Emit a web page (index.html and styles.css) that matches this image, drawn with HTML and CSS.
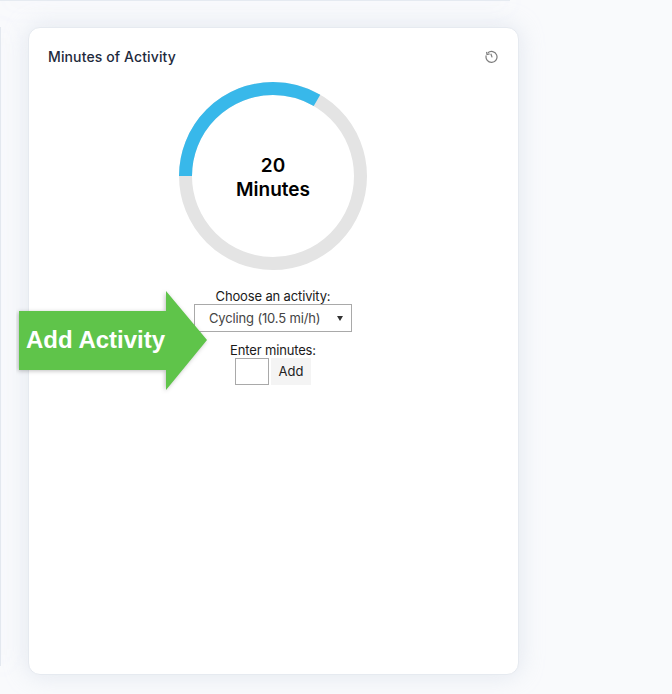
FILE: index.html
```html
<!DOCTYPE html>
<html lang="en">
<head>
  <meta charset="UTF-8" />
  <title>Minutes of Activity</title>
  <link rel="stylesheet" href="styles.css">
</head>
<body>
  <div class="top-card"></div>

  <div class="row">
    <div class="side-card"></div>

    <div class="card">
      <div class="card-head">
        <div class="card-title">Minutes of Activity</div>
        <svg class="history" width="14" height="14" viewBox="0 0 14 14" fill="none" stroke="#7d7d7d" stroke-width="1.2">
          <path d="M3.9 2.8A5.5 5.5 0 1 1 2.2 5.5" />
          <path d="M2.6 1.8L3 4.6L5.6 3.9" />
          <path d="M6.8 3.8L8.1 7.4" />
        </svg>
      </div>

      <div class="donut">
        <svg width="188" height="188" viewBox="0 0 188 188" fill="none" stroke-width="13">
          <circle cx="94" cy="94" r="87.5" stroke="#e4e4e4" />
          <circle cx="94" cy="94" r="87.5" stroke="#38b8ea" stroke-dasharray="183.3 549.8" transform="rotate(180 94 94)" />
        </svg>
        <div class="donut-label">20<br>Minutes</div>
      </div>

      <form class="activity-form">
        <label class="field-label">Choose an activity:</label>
        <div class="select">Cycling (10.5 mi/h)</div>
        <label class="field-label minutes-label">Enter minutes:</label>
        <div class="minutes-row">
          <div class="minutes-input"></div>
          <div class="add-btn">Add</div>
        </div>
      </form>
    </div>
  </div>

  <!-- callout over the card -->
  <div class="callout">
    <svg width="200" height="112" viewBox="0 0 200 112">
      <polygon class="arrow" points="3,23 150,23 150,3 191,52 150,102 150,82 3,82" />
    </svg>
    <div class="callout-text">Add Activity</div>
  </div>
</body>
</html>
```

FILE: styles.css
```css
* {
  box-sizing: border-box;
}

body {
  margin: 0;
  height: 694px;
  overflow: hidden;
  background-color: #f9fafc;
  font-family: 'Inter', 'Liberation Sans', sans-serif;
  position: relative;
}

.top-card {
  width: 510px;
  height: 1px;
  background-color: #e6ebf1;
  box-shadow: 0 0 24px rgba(190, 202, 220, 0.4);
}

.row {
  display: flex;
  align-items: flex-start;
  gap: 27px;
  padding-top: 26px;
}

.side-card {
  width: 1px;
  height: 639px;
  background-color: #e3e8ef;
  box-shadow: 0 0 24px rgba(190, 202, 220, 0.4);
}

.card {
  width: 491px;
  height: 648px;
  background-color: #fff;
  border: 1px solid #e6eaf0;
  border-radius: 12px;
  box-shadow: 0 0 24px rgba(190, 202, 220, 0.4);
  padding: 18px 20px 0 19px;
}

.card-head {
  display: flex;
  align-items: center;
  justify-content: space-between;
  height: 22px;
  padding-bottom: 1px;
}

.card-title {
  font-size: 14px;
  font-weight: 500;
  color: #1e2a3c;
  letter-spacing: 0.12px;
}

.donut {
  position: relative;
  width: 188px;
  height: 188px;
  margin: 14px auto 0;
}

.donut svg {
  display: block;
}

.donut-label {
  position: absolute;
  inset: 0;
  display: flex;
  align-items: center;
  justify-content: center;
  text-align: center;
  font-size: 19px;
  font-weight: 600;
  line-height: 24px;
  color: #000;
  padding-top: 3px;
}

.activity-form {
  display: flex;
  flex-direction: column;
  align-items: center;
  margin-top: 19px;
}

.field-label {
  font-size: 13px;
  line-height: 15px;
  color: #1a1a1a;
  letter-spacing: -0.15px;
}

.select {
  position: relative;
  width: 158px;
  height: 28px;
  border: 1px solid #a9a9a9;
  padding-left: 14px;
  font-size: 13px;
  line-height: 26px;
  color: #444;
  letter-spacing: -0.15px;
}

.select::after {
  content: '';
  position: absolute;
  right: 8px;
  top: 11px;
  border-left: 3.5px solid transparent;
  border-right: 3.5px solid transparent;
  border-top: 5px solid #333;
}

.minutes-label {
  margin-top: 11px;
}

.minutes-row {
  display: flex;
  gap: 2px;
}

.minutes-input {
  width: 34px;
  height: 27px;
  border: 1px solid #a9a9a9;
  background-color: #fff;
}

.add-btn {
  width: 40px;
  height: 27px;
  background-color: #f4f4f4;
  font-size: 13px;
  line-height: 27px;
  text-align: center;
  color: #222;
}

.callout {
  position: absolute;
  left: 16px;
  top: 288px;
  width: 200px;
  height: 112px;
}

.callout svg {
  display: block;
}

.arrow {
  fill: #5fc44a;
  filter: drop-shadow(-1px 1px 2px rgba(0, 0, 0, 0.25));
}

.callout-text {
  position: absolute;
  left: 10px;
  top: 35px;
  font-family: 'Liberation Sans', sans-serif;
  font-size: 24px;
  font-weight: 700;
  line-height: 34px;
  color: #fff;
}
```
